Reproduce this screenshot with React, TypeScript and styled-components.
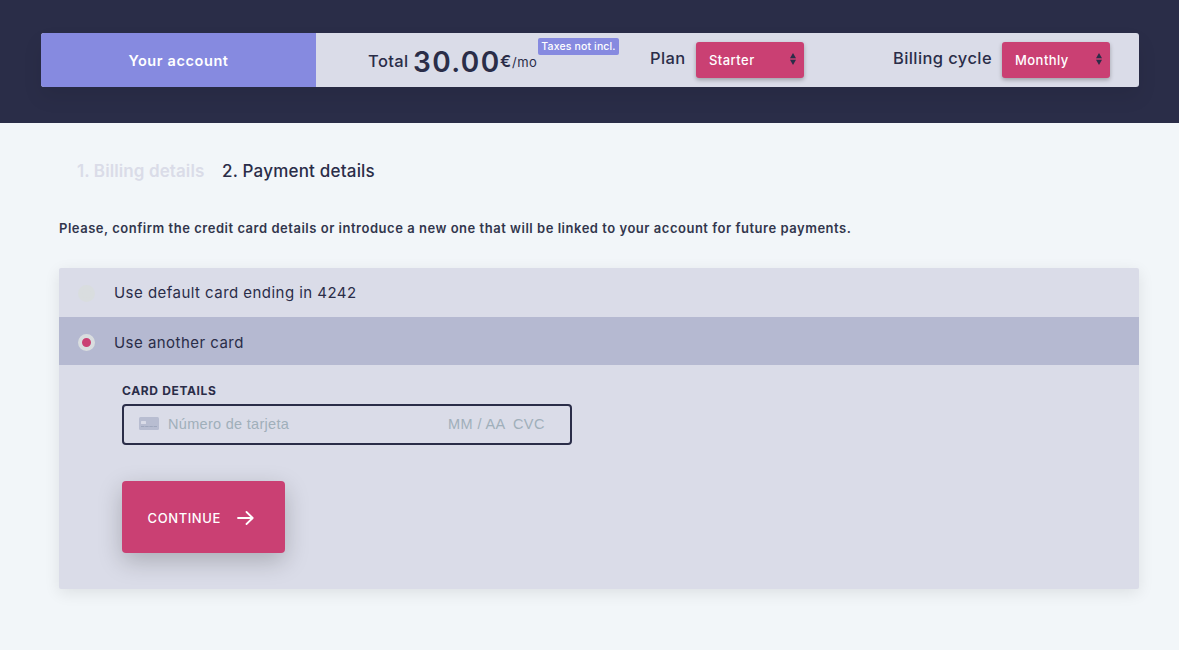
import React from 'react';
import styled, { createGlobalStyle } from 'styled-components';

const COLORS = {
  navy: '#2a2d48',
  violet: '#868ae0',
  lavender: '#dadce8',
  selected: '#b5b9d1',
  pink: '#ca4073',
  background: '#f2f6f9',
  radio: '#d9dddf',
  placeholder: '#a0afba',
  text: '#32364d',
};

const App: React.FC = () => (
  <>
    <GlobalStyle />
    <Header>
      <Summary>
        <Account>Your account</Account>
        <Total>
          <TotalLabel>Total</TotalLabel>
          <Amount>30.00</Amount>
          <Currency>€</Currency>
          <Period>/mo</Period>
          <TaxBadge>Taxes not incl.</TaxBadge>
        </Total>
        <Field offset={31}>
          <FieldLabel width={35}>Plan</FieldLabel>
          <Dropdown value="Starter" />
        </Field>
        <Field offset={89}>
          <FieldLabel width={98}>Billing cycle</FieldLabel>
          <Dropdown value="Monthly" />
        </Field>
      </Summary>
    </Header>
    <Main>
      <Steps>
        <Step>1. Billing details</Step>
        <Step active>2. Payment details</Step>
      </Steps>
      <Message>
        Please, confirm the credit card details or introduce a new one that will
        be linked to your account for future payments.
      </Message>
      <Panel>
        <Option>
          <Radio />
          Use default card ending in 4242
        </Option>
        <Option selected>
          <Radio selected />
          Use another card
        </Option>
        <CardForm>
          <CardLabel>CARD DETAILS</CardLabel>
          <CardInput>
            <CardIcon />
            <CardNumber>Número de tarjeta</CardNumber>
            <Expiry>MM / AA</Expiry>
            <Cvc>CVC</Cvc>
          </CardInput>
          <Continue>
            <ContinueText>CONTINUE</ContinueText>
            <ArrowIcon />
          </Continue>
        </CardForm>
      </Panel>
    </Main>
  </>
);

const Dropdown: React.FC<DropdownProps> = ({ value }) => (
  <Select>
    <SelectValue>{value}</SelectValue>
    <svg width="6" height="12" viewBox="0 0 6 12" fill={COLORS.navy}>
      <path d="M3 0L6 5.2H0zM3 12L6 6.8H0z" />
    </svg>
  </Select>
);

const CardIcon = () => (
  <svg width="20" height="13" viewBox="0 0 20 13">
    <rect width="20" height="13" rx="1.5" fill="#b8bdd1" />
    <rect x="2" y="4" width="5" height="3" rx="0.5" fill={COLORS.lavender} />
    <path
      d="M2 9.5H18"
      stroke="#9fa7bd"
      strokeWidth="1"
      strokeDasharray="3.4 0.8"
    />
  </svg>
);

const ArrowIcon = () => (
  <svg
    width="17"
    height="14"
    viewBox="0 0 17 14"
    fill="none"
    stroke="#fff"
    strokeWidth="1.8"
    strokeLinecap="round"
    strokeLinejoin="round"
  >
    <path d="M1 7H15.5M9.5 1L15.7 7L9.5 13" />
  </svg>
);

const GlobalStyle = createGlobalStyle`
  * {
    box-sizing: border-box;
  }

  body {
    margin: 0;
    background: ${COLORS.background};
    color: ${COLORS.navy};
    font-family: Inter, 'Open Sans', sans-serif;
  }
`;

const Header = styled.header`
  height: 123px;
  padding: 33px 40px 0 41px;
  background: ${COLORS.navy};
`;

const Summary = styled.div`
  display: flex;
  height: 54px;
  border-radius: 3px;
  background: ${COLORS.lavender};
  box-shadow: 0 10px 20px rgba(0, 0, 0, 0.08);
  white-space: nowrap;
`;

const Account = styled.div`
  display: flex;
  align-items: center;
  justify-content: center;
  width: 275px;
  border-radius: 3px 0 0 3px;
  background: ${COLORS.violet};
  color: #fff;
  font-size: 14.5px;
  font-weight: 600;
  letter-spacing: 0.6px;
  line-height: 20px;
  padding-top: 1px;
`;

const Total = styled.div`
  display: flex;
  align-items: flex-start;
  width: 303px;
  padding: 10px 0 0 52px;
  line-height: 36px;
`;

const TotalLabel = styled.span`
  width: 45px;
  font-size: 16.5px;
  font-weight: 500;
  letter-spacing: 0.4px;
`;

const Amount = styled.span`
  width: 87px;
  padding-top: 1px;
  font-size: 28px;
  font-weight: 600;
  letter-spacing: 1.4px;
`;

const Currency = styled.span`
  width: 12px;
  font-size: 16.5px;
  font-weight: 600;
`;

const Period = styled.span`
  width: 26px;
  padding-top: 1px;
  font-size: 13px;
  letter-spacing: 0.5px;
`;

const TaxBadge = styled.span`
  width: 81px;
  height: 17px;
  margin-top: -5px;
  border-radius: 2px;
  background: ${COLORS.violet};
  color: #fff;
  font-size: 10.5px;
  font-weight: 500;
  letter-spacing: 0.15px;
  line-height: 17px;
  text-align: center;
`;

const Field = styled.div<{ offset: number }>`
  display: flex;
  margin-left: ${props => props.offset}px;
  padding-top: 9px;
`;

const FieldLabel = styled.span<{ width: number }>`
  width: ${props => props.width}px;
  margin-right: 11px;
  font-size: 16.5px;
  font-weight: 500;
  letter-spacing: 0.4px;
  line-height: 32px;
`;

const Select = styled.div`
  display: flex;
  align-items: center;
  justify-content: space-between;
  width: 108px;
  height: 36px;
  padding: 0 8px 2px 13px;
  border-radius: 3px;
  background: ${COLORS.pink};
  color: #fff;
  box-shadow: 0 2px 4px rgba(0, 0, 0, 0.28);
`;

const SelectValue = styled.span`
  padding-top: 2px;
  font-size: 13px;
  font-weight: 500;
  letter-spacing: 0.45px;
`;

const Main = styled.main`
  min-height: 527px;
  padding: 37px 40px 0 59px;
`;

const Steps = styled.div`
  display: flex;
  gap: 18px;
  padding-left: 18px;
  line-height: 22px;
`;

const Step = styled.span<{ active?: boolean }>`
  width: ${props => (props.active ? 160 : 127)}px;
  color: ${props => (props.active ? COLORS.navy : COLORS.lavender)};
  font-size: 17px;
  font-weight: ${props => (props.active ? 500 : 600)};
  letter-spacing: ${props => (props.active ? 0.2 : 0.1)}px;
  white-space: nowrap;
`;

const Message = styled.p`
  margin: 36px 0 30px;
  color: ${COLORS.text};
  font-size: 13px;
  font-weight: 600;
  letter-spacing: 0.52px;
  line-height: 20px;
  white-space: nowrap;
`;

const Panel = styled.section`
  height: 321px;
  border-radius: 2px;
  background: ${COLORS.lavender};
  box-shadow: 0 4px 16px rgba(0, 0, 0, 0.09);
`;

const Option = styled.div<{ selected?: boolean }>`
  display: flex;
  align-items: center;
  gap: 19px;
  height: ${props => (props.selected ? 48 : 49)}px;
  padding: ${props => (props.selected ? '2px' : '1px')} 0 0 19px;
  background: ${props => (props.selected ? COLORS.selected : 'transparent')};
  font-size: 15px;
  letter-spacing: 0.46px;
  line-height: ${props => (props.selected ? 19 : 18)}px;
`;

const Radio = styled.span<{ selected?: boolean }>`
  width: 17px;
  height: 17px;
  border: 4px solid ${COLORS.radio};
  border-radius: 50%;
  background: ${props => (props.selected ? COLORS.pink : COLORS.radio)};
`;

const CardForm = styled.div`
  padding: 17px 0 0 63px;
`;

const CardLabel = styled.div`
  margin-bottom: 4px;
  font-size: 12px;
  font-weight: 700;
  letter-spacing: 0.65px;
  line-height: 18px;
`;

const CardInput = styled.div`
  display: flex;
  align-items: center;
  width: 450px;
  height: 41px;
  padding: 0 15px 2px;
  border: 2px solid ${COLORS.navy};
  border-radius: 4px;
  color: ${COLORS.placeholder};
  font-family: 'Liberation Sans', sans-serif;
  font-size: 14.5px;
  white-space: nowrap;
`;

const CardNumber = styled.span`
  width: 280px;
  margin-left: 9px;
  letter-spacing: 0.3px;
`;

const Expiry = styled.span`
  width: 65px;
  letter-spacing: 0.4px;
`;

const Cvc = styled.span`
  letter-spacing: 0.4px;
`;

const Continue = styled.button`
  display: flex;
  align-items: center;
  width: 163px;
  height: 72px;
  margin-top: 36px;
  padding: 2px 0 0 25.5px;
  border: 0;
  border-radius: 4px;
  background: ${COLORS.pink};
  color: #fff;
  box-shadow: 0 8px 24px rgba(0, 0, 0, 0.22);
  font-family: inherit;
`;

const ContinueText = styled.span`
  width: 89px;
  font-size: 13px;
  font-weight: 500;
  letter-spacing: 0.6px;
  text-align: left;
`;

interface DropdownProps {
  value: string;
}

export default App;
